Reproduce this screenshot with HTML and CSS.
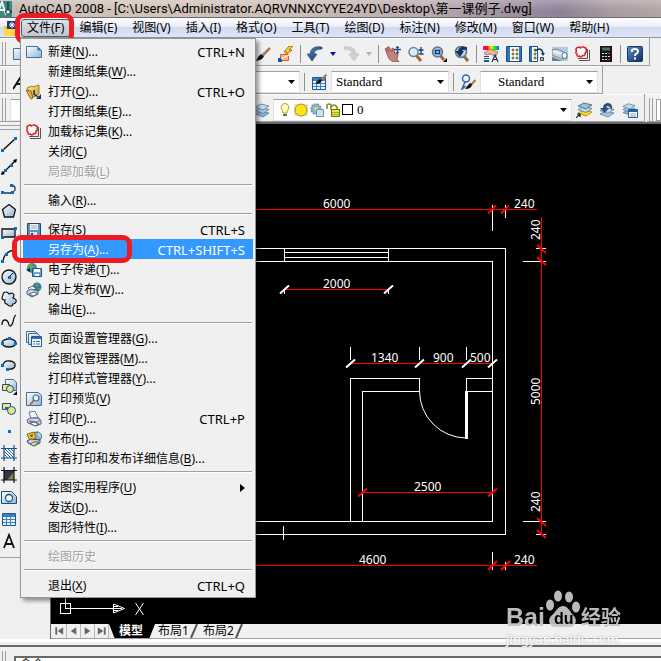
FILE: index.html
```html
<!DOCTYPE html>
<html lang="zh-CN">
<head>
<meta charset="utf-8">
<title>AutoCAD 2008</title>
<link rel="stylesheet" href="styles.css">
</head>
<body>
<svg class="sprite" aria-hidden="true">
  <defs>
    <linearGradient id="paper" x1="0" y1="0" x2="1" y2="1"><stop offset="0" stop-color="#fff"/><stop offset="1" stop-color="#8fb4d4"/></linearGradient>
    <linearGradient id="gold" x1="0" y1="0" x2="1" y2="1"><stop offset="0" stop-color="#fff2a0"/><stop offset="1" stop-color="#c89a18"/></linearGradient>
    <linearGradient id="navy" x1="0" y1="0" x2="1" y2="1"><stop offset="0" stop-color="#5b8fc4"/><stop offset="1" stop-color="#0d2f5c"/></linearGradient>
    <linearGradient id="hue"><stop offset="0" stop-color="#e0f"/><stop offset=".25" stop-color="#f00"/><stop offset=".5" stop-color="#fe0"/><stop offset=".75" stop-color="#0e3"/><stop offset="1" stop-color="#06f"/></linearGradient>
    <pattern id="diag" width="3" height="3" patternUnits="userSpaceOnUse"><rect width="3" height="3" fill="#fff"/><path d="M0 0l3 3" stroke="#1b64a8"/></pattern>
  </defs>
  <symbol id="i-new" viewBox="0 0 16 16"><path d="M.5 2.5h11l4 4v7H.5z" fill="url(#paper)" stroke="#3f6f9f"/><path d="M11.500 2.500v4h4z" fill="#3f6f9f"/></symbol>
  <symbol id="i-open" viewBox="0 0 16 16"><path d="M1 4l5-2 1 1 6-2v9l-7 4z" fill="url(#gold)" stroke="#a87c20"/><path d="M0 6l5 1 2 7-2 1z" fill="#e8b840" stroke="#8a6414"/><path d="M8 6v4l4 3" fill="none" stroke="#1d2f5a" stroke-width="1.500"/><path d="M10 15h5v-5z" fill="#1d2f5a"/></symbol>
  <symbol id="i-markup" viewBox="0 0 16 16"><path d="M4 14.500h10.500V4M3 12.500h9.500V3" fill="none" stroke="#555" stroke-width="1"/><path d="M0 0h12v12H0z" fill="#fbdde0"/><path d="M3 1.500q1.500-1 2.500.5Q8 0 9 1.500q3 0 2 3 1 2-1 2.500.5 3-2.500 2.500-1.500 2.500-3 .5Q1.500 11 2 8q-2-1-.5-3Q0 2 3 1.500z" fill="#fff" stroke="#d82434" stroke-width="1.500"/></symbol>
  <symbol id="i-save" viewBox="0 0 16 16"><path d="M1.500 1.500h13v13h-13z" fill="#5f90c0" stroke="#204870"/><path d="M4 2h8v6H4z" fill="#eef3f8"/><path d="M5 4h6M5 6h6" stroke="#9ab"/><path d="M4 10h7v4H4z" fill="#dce6f0"/><path d="M5 11h2v3H5z" fill="#204870"/></symbol>
  <symbol id="i-etrans" viewBox="0 0 16 16"><circle cx="6" cy="6" r="5" fill="#3388b8"/><path d="M2 4q3-4 5-1T4 8zM8 6l3-2v4z" fill="#5ab04a"/><path d="M0 8l4-2v4z" fill="#123"/><path d="M6.500 6.500h9v8h-9z" fill="#6fa8d8" stroke="#205080"/><path d="M8 7h6v3H8zM9 12h4v2H9z" fill="#fff"/></symbol>
  <symbol id="i-web" viewBox="0 0 16 16"><circle cx="11" cy="5" r="4.500" fill="#2b76b8"/><path d="M9 2q3-2 4 1l-2 3zM12 6h3l-2 3z" fill="#57a548"/><path d="M2 6l5-2 3 3-5 2z" fill="#fff" stroke="#567"/><path d="M1 9l4-2 7 2v3l-6 3-5-3z" fill="#c9d4e6" stroke="#4d5e80"/><path d="M3 12l5-2 4 2-5 2z" fill="#fff" stroke="#567"/></symbol>
  <symbol id="i-pages" viewBox="0 0 16 16"><path d="M.5.5h9l2 2v9H.5z" fill="url(#paper)" stroke="#3f6f9f"/><path d="M2.500 2.500h9l2 2v9h-11z" fill="url(#paper)" stroke="#3f6f9f"/><path d="M5.500 5.500h10v10h-10z" fill="#f4f8fc" stroke="#2a5890"/><path d="M6 6h9v2H6z" fill="#2f6fae"/><path d="M7 10.500h2M10 10.500h4M7 13h2M10 13h4" stroke="#2f6fae"/></symbol>
  <symbol id="i-preview" viewBox="0 0 16 16"><path d="M.5 1.500h12l3 3v10H.5z" fill="url(#paper)" stroke="#3f6f9f"/><path d="M8 9l-4 5" stroke="#b56a30" stroke-width="2"/><circle cx="10" cy="7" r="3" fill="#e2f1fb" stroke="#4d6a88" stroke-width="1.200"/></symbol>
  <symbol id="i-print" viewBox="0 0 16 16"><path d="M3 1l6-.5 3 6-7 1z" fill="#fff" stroke="#67758d"/><path d="M1 9l3-2 9 0 2 3v3l-5 2-8-3z" fill="#c7cfdf" stroke="#53617a"/><path d="M3 10l8 1 3-2M4 12l4-1 5 2-4 2z" fill="#f8fafe" stroke="#53617a"/></symbol>
  <symbol id="i-publish" viewBox="0 0 16 16"><circle cx="11" cy="5.500" r="4.500" fill="#7db5dc" stroke="#356"/><path d="M12 1q4 2 3 6l-3-2z" fill="#b9dcc0"/><path d="M1 3l7-2 2 6-6 3z" fill="#f1c531" stroke="#8c6a10"/><path d="M4 4l2 2M6 3v3" stroke="#503c00"/><path d="M1 10l4-2 9 1v3l-6 3-6-3z" fill="#c7cfdf" stroke="#3a4660"/><path d="M4 13l4-2 5 0-5 4z" fill="#f6e27a" stroke="#53617a"/></symbol>
  <symbol id="i-brush" viewBox="0 0 16 16"><path d="M15 2L9 8" stroke="#b07a48" stroke-width="2.500"/><path d="M10 7L8 9" stroke="#888" stroke-width="3"/><path d="M9 10q-1 4-8 5 2-5 5-7z" fill="#161616"/></symbol>
  <symbol id="i-block" viewBox="0 0 16 16"><path d="M11 0L6 6h3L6 10l8-6h-3l4-4z" fill="#ffd21f" stroke="#8b5a00" stroke-width=".8"/><path d="M2.500 8.500h8v6h-8z" fill="#ffb080" stroke="#e06020"/><path d="M0 12h4v4H0z" fill="#0a5cad"/><path d="M3 13L11 9" stroke="#fff"/></symbol>
  <symbol id="i-undo" viewBox="0 0 16 16"><path d="M15 1Q4-1 3 8H0l5 7 5-7H7q0-5 8-5z" fill="url(#navy)" stroke="#17365f" stroke-width=".6"/></symbol>
  <symbol id="i-redo" viewBox="0 0 16 16"><path d="M1 1q11-2 12 7h3l-5 7-5-7h3q0-5-8-5z" fill="#cfcfcf" stroke="#bbb" stroke-width=".6"/></symbol>
  <symbol id="i-pan" viewBox="0 0 16 16"><path d="M0 3l1-1 3 4-2-5h2l3 5V2l2 1 1 5 2-1 1 2-1 4 2 3h-4q-6-1-7-6z" fill="#c28378" stroke="#8a4a44" stroke-width=".8"/><path d="M12.500 0v8M9 3.500h7" stroke="#1c4b82" stroke-width="1.300"/><path d="M10.500 2l2-2 2 2zM10.500 6l2 2 2-2z" fill="#1c4b82"/></symbol>
  <symbol id="i-zoom" viewBox="0 0 16 16"><path d="M8 9l5 6" stroke="#a56430" stroke-width="3"/><circle cx="5.500" cy="6" r="4.500" fill="#d8ebf6" stroke="#6d8496" stroke-width="1.500"/><path d="M13 1v6M10.500 4h5M10.500 8h5" stroke="#123a70" stroke-width="1.300"/></symbol>
  <symbol id="i-zoomwin" viewBox="0 0 16 16"><path d="M9 9l4 5" stroke="#a56430" stroke-width="3"/><circle cx="6.500" cy="6" r="5" fill="#9fc5df" stroke="#5b7890" stroke-width="1.500"/><path d="M4.500 4.500h4v3h-4z" fill="#dceefa" stroke="#123a70" stroke-width="1.500"/><path d="M16 12v4h-4z" fill="#000"/></symbol>
  <symbol id="i-zoomprev" viewBox="0 0 16 16"><path d="M9 9l5 6" stroke="#a56430" stroke-width="3"/><circle cx="7" cy="6" r="5.500" fill="#b9d3e6" stroke="#5b7890" stroke-width="1.500"/><path d="M13 1Q5-1 4 5H1l5 6 4-6H8q1-2 5-1z" fill="#17365f"/></symbol>
  <symbol id="i-props" viewBox="0 0 16 16"><path d="M0 0h16v4H0z" fill="url(#hue)"/><path d="M1 7l6-4 8 3-2 4-6-2-4 1z" fill="#efb7a2" stroke="#9a5244" stroke-width=".7"/><path d="M1 10.500h5M1 12.500h5" stroke="#257"/><path d="M1 15h5" stroke="#257" stroke-width="2"/><path d="M9 16l3-7 3 7M10 13.500h4" fill="none" stroke="#1c3050" stroke-width="1.200"/></symbol>
  <symbol id="i-center" viewBox="0 0 16 16"><path d="M.5.5h15v15H.5z" fill="#fff" stroke="#0f4f94"/><path d="M1 1h3v14H1zM13 1h2v14h-2z" fill="#2f75b8"/><path d="M6 3h2v2H6zM10 3h2v2h-2zM6 7h2v2H6zM10 7h2v2h-2zM6 11h2v2H6zM10 11h2v2h-2z" fill="#d8b020" stroke="#334" stroke-width=".5"/></symbol>
  <symbol id="i-palettes" viewBox="0 0 16 16"><path d="M.5.500h8v15h-8z" fill="#fff" stroke="#0f4f94"/><path d="M1 1h2v14H1z" fill="#2f75b8"/><path d="M5 3h2v2H5zM5 7h2v2H5zM5 11h2v2H5z" fill="#d8b020" stroke="#334" stroke-width=".5"/><path d="M6 5q7-5 8 3" fill="none" stroke="#17365f" stroke-width="1.500"/><path d="M12 7h4l-2 3z" fill="#17365f"/><path d="M11.500 11.500h3v3h-3z" fill="#9cc" stroke="#345"/></symbol>
  <symbol id="i-sheets" viewBox="0 0 16 16"><path d="M0 1h16v14H0z" fill="#a9cfe4"/><path d="M0 4l5-1 9 4 1 5-5 1L0 9z" fill="#cfd8dc" stroke="#6a7a84" stroke-width=".8"/><path d="M1 5l11 4" stroke="#f4f7f8" stroke-width="1.500"/><ellipse cx="12.500" cy="9.500" rx="2.500" ry="3" fill="#fff" stroke="#566"/><path d="M0 11l10 4H0z" fill="#6b7c88"/></symbol>
  <symbol id="i-calc" viewBox="0 0 16 16"><path d="M2 0h12v16H2z" fill="#151515"/><path d="M4 1.500h8v3H4z" fill="#4c755c"/><path d="M4 7h2v1H4zM7 7h2v1H7zM4 10h2v1H4zM7 10h2v1H7zM10 10h2v1h-2zM4 13h2v1H4zM7 13h2v1H7z" fill="#ddd"/><path d="M10 7h2v1h-2zM10 13h2v1h-2z" fill="#e33"/></symbol>
  <symbol id="i-help" viewBox="0 0 16 16"><rect x=".5" y=".5" width="15" height="15" rx="1" fill="url(#navy)" stroke="#123a6a"/><path d="M5 6V4.500Q5 3 8 3t3 2.500q0 1.500-1.500 2T8 10" fill="none" stroke="#fff" stroke-width="2"/><path d="M7 11.500h2v2H7z" fill="#fff"/></symbol>
  <symbol id="i-tstyle" viewBox="0 0 16 16"><path d="M0 15L9 1l2 14M3 10h7" fill="none" stroke="#111" stroke-width="2"/></symbol>
  <symbol id="i-table" viewBox="0 0 16 16"><path d="M1.500 2.500h13v12h-13z" fill="#e8f1f9" stroke="#1d5a9a"/><path d="M2 3h12v3H2z" fill="#3c7fc0"/><path d="M2 8.500h12M2 11.500h12M5.500 3v11M9.500 3v11" stroke="#3c7fc0"/></symbol>
  <symbol id="i-tablestyle" viewBox="0 0 16 16"><path d="M1.500 3.500h13v12h-13z" fill="#e8f1f9" stroke="#1d5a9a"/><path d="M2 4h12v3H2z" fill="#3c7fc0"/><path d="M2 9.500h12M2 12.500h12M5.500 4v11M9.500 4v11" stroke="#3c7fc0"/><path d="M15.500.5L10 6" stroke="#b07a48" stroke-width="2"/><path d="M11 6q-1 4-6 4 1-4 4-5z" fill="#161616"/></symbol>
  <symbol id="i-leader" viewBox="0 0 16 16"><circle cx="6" cy="4.500" r="3.500" fill="#e7f2fb" stroke="#2b69a6" stroke-width="1.500"/><path d="M5 8L2 15l4-3" fill="none" stroke="#2b69a6" stroke-width="1.500"/><path d="M15.500 6L11 11" stroke="#b07a48" stroke-width="2"/><path d="M12 10q0 5-7 5 2-3 5-6z" fill="#161616"/></symbol>
  <symbol id="i-layers" viewBox="0 0 16 16"><path d="M1 12l6-3 8 2-6 4z" fill="#8fb2cf" stroke="#55789a" stroke-width=".8"/><path d="M1 8.500l6-3 8 2-6 4z" fill="#a9c6de" stroke="#55789a" stroke-width=".8"/><path d="M1 5l6-3 8 2-6 4z" fill="#c3daec" stroke="#55789a" stroke-width=".8"/></symbol>
  <symbol id="i-laycur" viewBox="0 0 16 16"><path d="M2 11l6-3 8 2-6 4z" fill="#f5d820" stroke="#a08000" stroke-width=".8"/><path d="M2 7.500l6-3 8 2-6 4z" fill="#c3daec" stroke="#55789a" stroke-width=".8"/><path d="M2 4l6-3 8 2-6 4z" fill="#9fc0d0" stroke="#3d6070" stroke-width=".8"/><path d="M0 16l4-4M1 12h3v3" fill="none" stroke="#123" stroke-width="1.200"/></symbol>
  <symbol id="i-layprev" viewBox="0 0 16 16"><path d="M1 12l6-3 8 2-6 4z" fill="#aecbe2" stroke="#55789a" stroke-width=".8"/><path d="M1 8.500l6-3 8 2-6 4z" fill="#c3daec" stroke="#55789a" stroke-width=".8"/><path d="M13 8q1-8-5-7-4 1-4 5H1l5 5 4-5H7q0-2 2-2 2 1 4 4z" fill="#2e5276"/></symbol>
  <symbol id="i-laystate" viewBox="0 0 16 16"><use href="#i-layers" width="14" height="14"/><path d="M6.500 7.500h9v8h-9z" fill="#f4f8fc" stroke="#2a5890"/><path d="M7 8h8v2H7z" fill="#1f66b4"/><path d="M8 12h6M8 14h6" stroke="#8ab"/></symbol>
  <symbol id="i-bulb" viewBox="0 0 14 14"><path d="M7 .5a4 4 0 0 1 2.500 7L9 10H5l-.500-2.500A4 4 0 0 1 7 .5z" fill="#fffbc0" stroke="#b59c20"/><path d="M5 11h4v2H5z" fill="#667"/></symbol>
  <symbol id="i-sun" viewBox="0 0 14 14"><path d="M0 1h14v12H0z" fill="#e3e6c4"/><circle cx="7" cy="7" r="6" fill="#ffe21a" stroke="#98902c"/></symbol>
  <symbol id="i-vpfreeze" viewBox="0 0 14 14"><circle cx="6" cy="6" r="5" fill="#8fb0cc" stroke="#6d93b6" stroke-width="1.500" stroke-dasharray="2 1"/><circle cx="6" cy="6" r="2" fill="#d6e268"/><path d="M6.500 6.500h7v7h-7z" fill="#cfe0ee" stroke="#6d93b6"/></symbol>
  <symbol id="i-lock" viewBox="0 0 14 14"><path d="M1 6V2q2-2 4 0v5" fill="none" stroke="#7a8a20" stroke-width="1.500"/><path d="M5.500 6.500h8v7h-8z" fill="#f3ee27" stroke="#667018"/><path d="M6 9.500h7M6 11.500h7" stroke="#a8a820"/><path d="M5 4q3-4 6 0v2" fill="none" stroke="#7a8a20" stroke-width="1.500"/></symbol>
  <symbol id="i-line" viewBox="0 0 16 16"><path d="M2 13L14 2" stroke="#000" stroke-width="1.300"/><path d="M0 12h3v3H0zM13 0h3v3h-3z" fill="#0a6cc8"/></symbol>
  <symbol id="i-xline" viewBox="0 0 16 16"><path d="M1 15L15 1" stroke="#000" stroke-width="1.300"/><path d="M0 16l1-4 3 3zM16 0l-1 4-3-3z"/><path d="M3 10h3v3H3zM9 5h3v3H9z" fill="#0a6cc8"/></symbol>
  <symbol id="i-pline" viewBox="0 0 16 16"><path d="M1 12h10M9 4q6 0 5 5-1 2-4 2" fill="none" stroke="#234" stroke-width="1.300"/><path d="M0 10h3v3H0zM9 3h3v3H9zM10 10h3v3h-3z" fill="#0a6cc8"/></symbol>
  <symbol id="i-polygon" viewBox="0 0 16 16"><path d="M8 1.500l6.500 5-2 7.500h-9l-2-7.500z" fill="url(#paper)" stroke="#111" stroke-width="1.300"/></symbol>
  <symbol id="i-rect" viewBox="0 0 16 16"><path d="M1 4h13v8H1z" fill="url(#paper)" stroke="#111" stroke-width="1.300"/><path d="M0 11h3v3H0zM13 2h3v3h-3z" fill="#0a6cc8"/></symbol>
  <symbol id="i-arc" viewBox="0 0 16 16"><path d="M2 14Q3 5 13 3" fill="none" stroke="#111" stroke-width="1.300"/><path d="M0 13h3v3H0zM4 6h3v3H4zM12 1h3v3h-3z" fill="#0a6cc8"/></symbol>
  <symbol id="i-circle" viewBox="0 0 16 16"><circle cx="8" cy="8" r="7" fill="url(#paper)" stroke="#111" stroke-width="1.300"/><path d="M8 8l4-4" stroke="#111"/><path d="M7 7h3v3H7z" fill="#0a6cc8"/></symbol>
  <symbol id="i-cloud" viewBox="0 0 16 16"><path d="M2 4q0-3 3-3 2 0 3 2 4-2 5 1 0 2-1 3 4 1 3 4-1 2-3 2-1 3-3 2-2 0-3-2-3 0-2-4-3 0-3-2 0-1 1-3z" fill="url(#paper)" stroke="#111" stroke-width="1.200"/></symbol>
  <symbol id="i-spline" viewBox="0 0 16 16"><path d="M1 12q0-5 3-5t4 5q2 3 4-3 1-6 3-7" fill="none" stroke="#111" stroke-width="1.300"/></symbol>
  <symbol id="i-ellipse" viewBox="0 0 16 16"><ellipse cx="8" cy="8" rx="7" ry="4" fill="url(#paper)" stroke="#111" stroke-width="1.300"/><path d="M0 7h3v3H0zM7 2h3v3H7zM13 7h3v3h-3z" fill="#0a6cc8"/></symbol>
  <symbol id="i-ellarc" viewBox="0 0 16 16"><path d="M2 8q1-5 7-4 6 1 5 5t-8 3" fill="url(#paper)" stroke="#111" stroke-width="1.300"/><path d="M0 7h3v3H0zM5 11h3v3H5z" fill="#0a6cc8"/></symbol>
  <symbol id="i-insert" viewBox="0 0 16 16"><path d="M4.500.5h8l3 3v8h-11z" fill="url(#paper)" stroke="#3f6f9f"/><path d="M1.500 5.500h7v6h-7z" fill="#f6e27a" stroke="#1a5080"/><circle cx="9" cy="10" r="3.500" fill="#e9e58a" stroke="#1a5080"/><path d="M16 12v4h-4z" fill="#000"/></symbol>
  <symbol id="i-mkblock" viewBox="0 0 16 16"><path d="M1.500 2.500h8v6h-8z" fill="#f6e27a" stroke="#1a5080"/><circle cx="10.500" cy="9.500" r="4" fill="#e9e58a" stroke="#1a5080"/><path d="M4 6h3v3H4z" fill="#0a6cc8"/></symbol>
  <symbol id="i-point" viewBox="0 0 16 16"><path d="M7 7h3v3H7z" fill="#0a6cc8"/></symbol>
  <symbol id="i-hatch" viewBox="0 0 16 16"><path d="M3 3h10v10H3z" fill="url(#diag)"/><path d="M3 0v16M13 0v16M0 3.500h16M0 13h16" stroke="#15507f" stroke-width="1.200"/></symbol>
  <symbol id="i-gradient" viewBox="0 0 16 16"><path d="M3 3h10v10H3z" fill="#34344c"/><path d="M6 13l7-8v8z" fill="#8a8344"/><path d="M3 0v16M13 0v16M0 3.500h16M0 13h16" stroke="#111" stroke-width="1.200"/></symbol>
  <symbol id="i-region" viewBox="0 0 16 16"><path d="M.5 2.500h10l5 5v7H.5z" fill="url(#paper)" stroke="#1a5080"/><circle cx="8" cy="9" r="3.500" fill="#fff" stroke="#1a5080" stroke-width="1.300"/></symbol>
  <symbol id="i-mtext" viewBox="0 0 16 16"><path d="M3 15L8 2l5 13M5 11h6" fill="none" stroke="#111" stroke-width="1.800"/></symbol>
  <symbol id="i-dwg" viewBox="0 0 16 16"><path d="M0 6h5l1 2h6v8H0z" fill="#ffc81e"/><path d="M3 1h10v8H3z" fill="#1d3e86"/><path d="M5 5h6M8 2v6M6 3l4 4M10 3L6 7" stroke="#fff"/><path d="M0 9h11l-2 7H0z" fill="#ffd94a"/></symbol>
  <symbol id="i-app" viewBox="0 0 16 16"><path d="M0 0h16v16H0z" fill="#3f8581"/><path d="M1 14L6 1l4 13M3 9h6" fill="none" stroke="#e8fbf8" stroke-width="2"/><path d="M12 1v12M9 10.500h7" stroke="#123f40" stroke-width="1.500"/><path d="M10 9h4v4h-4z" fill="#fff" stroke="#123f40"/></symbol>
</svg>

<header class="titlebar"><svg class="icon"><use href="#i-app"/></svg><h1>AutoCAD 2008 - [C:\Users\Administrator.AQRVNNXCYYE24YD\Desktop\第一课例子.dwg]</h1></header>

<nav class="menubar">
  <svg class="icon doc-icon"><use href="#i-dwg"/></svg>
  <button class="active" aria-expanded="true">文件(F)</button><button>编辑(E)</button><button>视图(V)</button><button>插入(I)</button><button>格式(O)</button><button>工具(T)</button><button>绘图(D)</button><button>标注(N)</button><button>修改(M)</button><button>窗口(W)</button><button>帮助(H)</button>
  <span class="ring ring-file"></span>

  <div class="menu" role="menu">
    <button role="menuitem"><svg class="icon"><use href="#i-new"/></svg><span>新建(<u>N</u>)...</span><kbd>CTRL+N</kbd></button>
    <button role="menuitem"><i></i><span>新建图纸集(<u>W</u>)...</span></button>
    <button role="menuitem"><svg class="icon"><use href="#i-open"/></svg><span>打开(<u>O</u>)...</span><kbd>CTRL+O</kbd></button>
    <button role="menuitem"><i></i><span>打开图纸集(<u>E</u>)...</span></button>
    <button role="menuitem"><svg class="icon"><use href="#i-markup"/></svg><span>加载标记集(<u>K</u>)...</span></button>
    <button role="menuitem"><i></i><span>关闭(<u>C</u>)</span></button>
    <button role="menuitem" disabled><i></i><span>局部加载(<u>L</u>)</span></button>
    <hr>
    <button role="menuitem"><i></i><span>输入(<u>R</u>)...</span></button>
    <hr>
    <button role="menuitem"><svg class="icon"><use href="#i-save"/></svg><span>保存(<u>S</u>)</span><kbd>CTRL+S</kbd></button>
    <button role="menuitem" class="selected"><i></i><span>另存为(<u>A</u>)...</span><kbd>CTRL+SHIFT+S</kbd></button>
    <button role="menuitem"><svg class="icon"><use href="#i-etrans"/></svg><span>电子传递(<u>T</u>)...</span></button>
    <button role="menuitem"><svg class="icon"><use href="#i-web"/></svg><span>网上发布(<u>W</u>)...</span></button>
    <button role="menuitem"><i></i><span>输出(<u>E</u>)...</span></button>
    <hr>
    <button role="menuitem"><svg class="icon"><use href="#i-pages"/></svg><span>页面设置管理器(<u>G</u>)...</span></button>
    <button role="menuitem"><i></i><span>绘图仪管理器(<u>M</u>)...</span></button>
    <button role="menuitem"><i></i><span>打印样式管理器(<u>Y</u>)...</span></button>
    <button role="menuitem"><svg class="icon"><use href="#i-preview"/></svg><span>打印预览(<u>V</u>)</span></button>
    <button role="menuitem"><svg class="icon"><use href="#i-print"/></svg><span>打印(<u>P</u>)...</span><kbd>CTRL+P</kbd></button>
    <button role="menuitem"><svg class="icon"><use href="#i-publish"/></svg><span>发布(<u>H</u>)...</span></button>
    <button role="menuitem"><i></i><span>查看打印和发布详细信息(<u>B</u>)...</span></button>
    <hr>
    <button role="menuitem"><i></i><span>绘图实用程序(<u>U</u>)</span><b class="submenu-arrow"></b></button>
    <button role="menuitem"><i></i><span>发送(<u>D</u>)...</span></button>
    <button role="menuitem"><i></i><span>图形特性(<u>I</u>)...</span></button>
    <hr>
    <button role="menuitem" disabled><i></i><span>绘图历史</span></button>
    <hr>
    <button role="menuitem"><i></i><span>退出(<u>X</u>)</span><kbd>CTRL+Q</kbd></button>
    <span class="ring ring-saveas"></span>
  </div>
</nav>

<section class="toolbars">
  <div class="toolrow">
    <div class="toolbar">
      <span class="grip"></span>
      <button aria-label="新建"><svg class="icon"><use href="#i-new"/></svg></button><button aria-label="打开"><svg class="icon"><use href="#i-open"/></svg></button><button aria-label="保存"><svg class="icon"><use href="#i-save"/></svg></button><span class="sep"></span>
      <button aria-label="打印"><svg class="icon"><use href="#i-print"/></svg></button><button aria-label="打印预览"><svg class="icon"><use href="#i-preview"/></svg></button><button aria-label="发布"><svg class="icon"><use href="#i-publish"/></svg></button><span class="sep"></span>
      <button aria-label="页面设置"><svg class="icon"><use href="#i-pages"/></svg></button><button aria-label="网上发布"><svg class="icon"><use href="#i-web"/></svg></button><button aria-label="电子传递"><svg class="icon"><use href="#i-etrans"/></svg></button><button aria-label="点"><svg class="icon"><use href="#i-point"/></svg></button>
      <button aria-label="特性匹配"><svg class="icon"><use href="#i-brush"/></svg></button><button aria-label="块编辑器"><svg class="icon"><use href="#i-block"/></svg></button><span class="sep"></span>
      <button aria-label="放弃"><svg class="icon"><use href="#i-undo"/></svg></button><button class="caret" aria-label="放弃列表"></button><button aria-label="重做"><svg class="icon"><use href="#i-redo"/></svg></button><button class="caret off" aria-label="重做列表"></button><span class="sep"></span>
      <button aria-label="实时平移"><svg class="icon"><use href="#i-pan"/></svg></button><button aria-label="实时缩放"><svg class="icon"><use href="#i-zoom"/></svg></button><button aria-label="窗口缩放"><svg class="icon"><use href="#i-zoomwin"/></svg></button><button aria-label="缩放上一个"><svg class="icon"><use href="#i-zoomprev"/></svg></button><span class="sep"></span>
      <button aria-label="特性"><svg class="icon"><use href="#i-props"/></svg></button><button aria-label="设计中心"><svg class="icon"><use href="#i-center"/></svg></button><button aria-label="工具选项板"><svg class="icon"><use href="#i-palettes"/></svg></button><button aria-label="图纸集管理器"><svg class="icon"><use href="#i-sheets"/></svg></button><button aria-label="标记集管理器"><svg class="icon"><use href="#i-markup"/></svg></button><button aria-label="快速计算器"><svg class="icon"><use href="#i-calc"/></svg></button><span class="sep"></span>
      <button aria-label="帮助"><svg class="icon"><use href="#i-help"/></svg></button>
    </div>
  </div>
  <div class="toolrow">
    <div class="toolbar">
      <span class="grip"></span>
      <button aria-label="文字样式"><svg class="icon"><use href="#i-tstyle"/></svg></button><select class="combo" aria-label="文字样式列表"><option>Standard</option></select><span class="sep"></span>
      <button aria-label="标注样式"><svg class="icon"><use href="#i-brush"/></svg></button><select class="combo" aria-label="标注样式列表"><option>ISO-25</option></select><span class="sep"></span>
      <button aria-label="表格样式"><svg class="icon"><use href="#i-tablestyle"/></svg></button><select class="combo" aria-label="表格样式列表"><option>Standard</option></select><span class="sep"></span>
      <button aria-label="多重引线样式"><svg class="icon"><use href="#i-leader"/></svg></button><select class="combo indent" aria-label="多重引线样式列表"><option>Standard</option></select>
    </div>
  </div>
  <div class="toolrow">
    <div class="toolbar">
      <span class="grip"></span>
      <select class="combo workspace" aria-label="工作空间"><option>AutoCAD 经典</option></select>
      <button aria-label="图层特性"><svg class="icon"><use href="#i-layers"/></svg></button>
      <div class="layer-combo"><svg><use href="#i-bulb"/></svg><svg><use href="#i-sun"/></svg><svg><use href="#i-vpfreeze"/></svg><svg><use href="#i-lock"/></svg><span class="swatch"></span><select class="combo" aria-label="图层"><option>0</option></select></div>
      <button aria-label="置为当前图层"><svg class="icon"><use href="#i-laycur"/></svg></button><button aria-label="上一个图层"><svg class="icon"><use href="#i-layprev"/></svg></button><button aria-label="图层状态"><svg class="icon"><use href="#i-laystate"/></svg></button>
    </div>
    <div class="toolbar next"><span class="grip"></span><span class="field"></span></div>
  </div>
</section>

<main class="workspace-area">
  <aside class="dock">
    <div class="palette">
      <span class="hgrip"></span>
      <button aria-label="直线"><svg class="icon"><use href="#i-line"/></svg></button><button aria-label="构造线"><svg class="icon"><use href="#i-xline"/></svg></button><button aria-label="多段线"><svg class="icon"><use href="#i-pline"/></svg></button><button aria-label="正多边形"><svg class="icon"><use href="#i-polygon"/></svg></button><button aria-label="矩形"><svg class="icon"><use href="#i-rect"/></svg></button><button aria-label="圆弧"><svg class="icon"><use href="#i-arc"/></svg></button><button aria-label="圆"><svg class="icon"><use href="#i-circle"/></svg></button><button aria-label="修订云线"><svg class="icon"><use href="#i-cloud"/></svg></button><button aria-label="样条曲线"><svg class="icon"><use href="#i-spline"/></svg></button><button aria-label="椭圆"><svg class="icon"><use href="#i-ellipse"/></svg></button><button aria-label="椭圆弧"><svg class="icon"><use href="#i-ellarc"/></svg></button><button aria-label="插入块"><svg class="icon"><use href="#i-insert"/></svg></button><button aria-label="创建块"><svg class="icon"><use href="#i-mkblock"/></svg></button><button aria-label="点"><svg class="icon"><use href="#i-point"/></svg></button><button aria-label="图案填充"><svg class="icon"><use href="#i-hatch"/></svg></button><button aria-label="渐变色"><svg class="icon"><use href="#i-gradient"/></svg></button><button aria-label="面域"><svg class="icon"><use href="#i-region"/></svg></button><button aria-label="表格"><svg class="icon"><use href="#i-table"/></svg></button><button aria-label="多行文字"><svg class="icon"><use href="#i-mtext"/></svg></button>
    </div>
  </aside>
  <div class="document">
    <div class="canvas">
      <svg class="drawing" width="610" height="500" viewBox="51 124 610 500">
        <g class="wall" shape-rendering="crispEdges">
          <path d="M200 248.500H505.500V534.500H200M200 261.500H492.500V521.500H200"/>
          <path d="M284.500 248v13M388.500 248v13M284 252.500h104M284 257.500h104"/>
          <path d="M350.500 521V378.500H419.500V391.500H362.500V521M492 378.500H466.500V391.500H492M283.500 526v14"/>
          <path d="M466.500 391v48" stroke-width="3"/>
        </g>
        <path class="wall" d="M419.500 391A47 47 0 0 0 466 438"/>
        <g class="dim" shape-rendering="crispEdges">
          <path d="M200 209.500H537M284 289.500H388M350 363.500H492M362 492.500H492M200 565.500H537M541.500 217V534"/>
        </g>
        <g class="wall" shape-rendering="crispEdges">
          <path d="M492.500 205v26M505.500 205v13M350.500 347v13M419.500 347v13M466.500 347v13M492.500 552v18M505.500 562v8M536 248.500h10M523 261.500h23M523 521.500h23M536 534.500h10M284.500 289v5M388.500 289v5"/>
        </g>
        <path class="wall tick" d="M280 293.500l9-8M384 293.500l9-8M346 367.500l9-8M415 367.500l9-8M462 367.500l9-8M488 367.500l9-8"/>
        <path class="dim tick" d="M488 213.500l8-8M501 213.500l8-8M537 245l9 8M537 257l9 8M537 518l9 8M537 530l9 8M358 496.500l9-8M488 496.500l9-8M488 570l9-9M501 570l9-9"/>
        <g class="dimtext">
          <text x="323" y="208">6000</text><text x="514" y="208">240</text><text x="323" y="288">2000</text><text x="371" y="362">1340</text><text x="433" y="362">900</text><text x="470" y="362">500</text><text x="414" y="491">2500</text><text x="359" y="564">4600</text><text x="514" y="564">240</text>
          <text transform="translate(540 240) rotate(-90)">240</text><text transform="translate(540 405) rotate(-90)">5000</text><text transform="translate(540 512) rotate(-90)">240</text>
        </g>
        <g class="wall" shape-rendering="crispEdges"><path d="M60.500 603.500h10v10h-10zM65.500 590v18.500H113"/></g>
        <path class="wall" d="M113.500 604v9l11-4.500zM114 606.500h4M114 608.500h8M114 610.500h4M135.500 603l8 12M143.500 603l-8 12"/>
      </svg>
    </div>
    <div class="tabs">
      <button class="nav" aria-label="第一个"><svg viewBox="0 0 14 14"><path d="M3.500 3v8" stroke="#666" stroke-width="2"/><path d="M11 3v8L5 7z"/></svg></button>
      <button class="nav" aria-label="上一个"><svg viewBox="0 0 14 14"><path d="M10 3v8L4 7z"/></svg></button>
      <button class="nav" aria-label="下一个"><svg viewBox="0 0 14 14"><path d="M4 3v8l6-4z"/></svg></button>
      <button class="nav" aria-label="最后一个"><svg viewBox="0 0 14 14"><path d="M3 3v8l6-4z"/><path d="M10.500 3v8" stroke="#666" stroke-width="2"/></svg></button>
      <button class="tab current">模型</button><button class="tab">布局1</button><svg class="slant" viewBox="0 0 10 14"><path d="M1 14L7 0"/></svg><button class="tab">布局2</button><svg class="slant" viewBox="0 0 10 14"><path d="M1 14L7 0"/></svg>
    </div>
  </div>
</main>

<footer class="command"><span class="grip"></span><label class="prompt">命令:<input type="text"></label></footer>

<div class="watermark">
  <div class="brand"><span>Bai</span><svg viewBox="0 0 36 40"><ellipse cx="5" cy="15" rx="4" ry="5.500"/><ellipse cx="13" cy="6" rx="4" ry="5.500"/><ellipse cx="24" cy="7" rx="4" ry="5.500"/><ellipse cx="31" cy="17" rx="4" ry="5.500"/><path d="M18 16c5 0 7 6 11 10 4 5 1 11-4 11H10c-5 0-8-6-4-11 5-4 7-10 12-10z"/><text x="9" y="34">du</text></svg><span class="cn">经验</span></div>
  <div class="site">jingyan.baidu.com</div>
</div>
</body>
</html>
```

FILE: styles.css
```css
* { box-sizing: border-box; }

html { height: 100%; }

body {
  margin: 0;
  min-height: 100vh;
  height: 100%;
  display: flex;
  flex-direction: column;
  overflow: hidden;
  position: relative;
  background: #f0f0f0;
  color: #000;
  font: 12px/16px "Noto Sans", "Noto Sans CJK SC", sans-serif;
}

button, select, input { font: inherit; color: inherit; }

button {
  margin: 0;
  padding: 0;
  border: 0;
  background: none;
}

.sprite { position: absolute; width: 0; height: 0; }
.icon { width: 16px; height: 16px; flex: none; }

/* Title and menu bar */
.titlebar {
  flex: none;
  height: 18px;
  display: flex;
  align-items: center;
  gap: 7px;
  overflow: hidden;
  background:
    linear-gradient(rgba(255, 255, 255, .25), rgba(255, 255, 255, 0) 60%),
    linear-gradient(90deg, #c3b8b4, #d2c3b8 20%, #cdbdb6 45%, #b9a8ae 65%, #988a9c 80%, #8d8197 85%, #a8999f 92%, #b3a5a6);
  border-bottom: 1px solid #6f6a72;
}
.titlebar .icon { margin-left: -4px; }
.titlebar h1 { margin: 0; font: 400 13px/17px Roboto, "Noto Sans CJK SC", sans-serif; white-space: nowrap; }

.menubar {
  flex: none;
  position: relative;
  z-index: 2;
  height: 20px;
  display: flex;
  align-items: center;
  background: linear-gradient(#fff, #e9edf8 45%, #d3daee 50%, #dfe5f5);
  border-bottom: 1px solid #8e95a5;
}
.doc-icon { margin: 0 1px 0 4px; }
.menubar > button { padding: 0 8px 0 7px; height: 18px; white-space: nowrap; }
.menubar > button.active {
  padding: 0 5px;
  margin-right: 2px;
  border: 1px solid #555b68;
  border-radius: 3px;
  background: linear-gradient(#dcdfe6, #c3c7d1);
}

.menu {
  position: absolute;
  top: 20px;
  left: 20px;
  width: 236px;
  padding: 2px;
  border: 1px solid #979797;
  background: #f0f0f0;
  box-shadow: 3px 3px 4px rgba(0, 0, 0, .4);
}
.menu button {
  width: 100%;
  height: 20px;
  display: flex;
  align-items: center;
  gap: 6px;
  padding: 2px 8px 0 3px;
  text-align: left;
  white-space: nowrap;
}
.menu i { width: 16px; flex: none; }
.menu button > span { flex: 1; }
.menu u { text-underline-offset: 2px; }
.menu kbd { font-family: inherit; font-size: 13px; }
.menu button:disabled { color: #a0a0a0; text-shadow: 1px 1px #fff; }
.menu .selected { background: #3399ff; color: #fff; }
.menu hr {
  height: 2px;
  margin: 3px 1px 4px;
  border: 0;
  border-top: 1px solid #a0a0a0;
  border-bottom: 1px solid #fff;
}
.submenu-arrow {
  border: 4px solid transparent;
  border-right: 0;
  border-left: 5px solid #000;
}

.ring { position: absolute; border: 5px solid #ed1c24; border-radius: 9px; pointer-events: none; }
.ring-file { left: 15px; top: -5px; width: 59px; height: 31px; }
.ring-saveas { left: -9px; top: 196px; width: 120px; height: 28px; }

/* Toolbars */
.toolbars { flex: none; }
.toolrow { display: flex; height: 28px; }
.toolbar {
  flex: none;
  display: flex;
  align-items: center;
  padding: 4px 3px 0 0;
  border: 1px solid #a0a0a0;
  border-width: 0 1px 1px 0;
  box-shadow: inset 0 1px #fff;
}
.toolbar button {
  flex: none;
  width: 23px;
  height: 22px;
  display: grid;
  place-items: center;
}
.grip {
  flex: none;
  width: 9px;
  align-self: stretch;
  background: linear-gradient(90deg, transparent 2px, #a0a0a0 2px 3px, transparent 3px 5px, #a0a0a0 5px 6px, transparent 6px);
}
.sep { flex: none; width: 6px; height: 18px; background: linear-gradient(90deg, transparent 3px, #909090 3px 4px, transparent 4px); }
.toolbar .caret { width: 13px; }
.caret::after { content: ""; border: 3px solid transparent; border-bottom: 0; border-top: 4px solid #001c8c; }
.caret.off::after { border-top-color: #b0b0b8; }

.combo {
  width: 118px;
  height: 22px;
  margin: 0 1px;
  padding: 0 16px 0 4px;
  border: 1px solid #e3e3e3;
  border-top-color: #a0a0a0;
  border-radius: 0;
  appearance: none;
  font: 13px "Liberation Serif", "Noto Sans CJK SC", serif;
  background: #fff url("data:image/svg+xml,%3Csvg xmlns='http://www.w3.org/2000/svg' width='7' height='4'%3E%3Cpath d='M0 0h7L3.500 4z'/%3E%3C/svg%3E") no-repeat right 4px center;
}
.combo.indent { padding-left: 17px; }
.combo.workspace { width: 239px; padding-left: 12px; }
.layer-combo {
  width: 299px;
  height: 22px;
  display: flex;
  align-items: center;
  gap: 2px;
  padding-left: 4px;
  background: #fff;
  border: 1px solid #e3e3e3;
  border-top-color: #a0a0a0;
}
.layer-combo svg { width: 14px; height: 14px; flex: none; }
.swatch { width: 11px; height: 11px; border: 1px solid #000; flex: none; }
.layer-combo .combo { flex: 1; width: auto; height: 20px; margin: 0; border: 0; padding-left: 2px; }
.toolbar.next { flex: 1; margin-left: 2px; border-right: 0; padding-right: 0; overflow: hidden; }
.field { width: 100px; height: 22px; background: #fff; border: 1px solid #a0a0a0; }

/* Drawing area */
.workspace-area { flex: 1; min-height: 0; display: flex; }
.dock { flex: none; width: 50px; }
.palette {
  width: 21px;
  padding-bottom: 5px;
  border: 1px solid #a0a0a0;
  border-width: 0 1px 1px 0;
  display: flex;
  flex-direction: column;
}
.palette button { width: 18px; height: 22px; display: grid; place-items: center; }
.hgrip {
  height: 12px;
  background: linear-gradient(transparent 3px, #a0a0a0 3px 4px, transparent 4px 7px, #a0a0a0 7px 8px, transparent 8px);
}
.document { flex: 1; min-width: 0; display: flex; flex-direction: column; border-left: 1px solid #696969; border-top: 2px solid #696969; }
.canvas { flex: 1; min-height: 0; background: #000; overflow: hidden; }
.drawing { display: block; }
.wall { fill: none; stroke: #fff; }
.dim { fill: none; stroke: #f00; }
.tick { stroke-width: 2; }
.dimtext { fill: #fff; font: 12px "Noto Sans", sans-serif; }

.tabs { flex: none; height: 15px; display: flex; padding-left: 2px; border-bottom: 1px solid #a0a0a0; }
.nav { width: 14px; height: 14px; border-right: 1px solid #b8b8b8; }
.nav svg { display: block; width: 13px; height: 14px; fill: #666; }
.tab { padding: 0 1px 0 3px; line-height: 14px; }
.tab.current {
  padding: 0 12px 0 10px;
  background: #000;
  color: #fff;
  font-weight: 700;
  clip-path: polygon(0 0, 100% 0, 88% 100%, 12% 100%);
}
.slant { width: 10px; height: 14px; fill: none; stroke: #555; stroke-width: 2; }

.command {
  flex: none;
  height: 22px;
  display: flex;
  padding-top: 11px;
  overflow: hidden;
  border-top: 1px solid #fff;
  background: linear-gradient(#fff 2px, #f0f0f0 2px 5px, #696969 5px 7px, #f0f0f0 7px);
}
.command .grip { width: 14px; }
.command .prompt {
  flex: 1;
  height: 24px;
  margin-top: 5px;
  display: flex;
  background: #fff;
  border: 2px solid #696969;
  border-right: 0;
  padding-left: 4px;
  line-height: 14px;
}
.prompt input { flex: 1; border: 0; padding: 0; }

/* Watermark */
.watermark { position: absolute; right: 38px; bottom: 15px; width: 117px; pointer-events: none; color: #c4c4c4; }
.brand { display: flex; align-items: flex-end; margin-bottom: 2px; opacity: .95; font: 700 25px/26px "Liberation Sans", sans-serif; }
.brand svg { width: 36px; height: 40px; flex: none; fill: #c4c4c4; }
.brand svg text { font-size: 16px; fill: #000; }
.brand .cn { font: 700 20px/26px "Noto Sans CJK SC", sans-serif; }
.site { color: #fff; font-size: 13px; line-height: 14px; text-shadow: 0 0 2px #999; }
```
